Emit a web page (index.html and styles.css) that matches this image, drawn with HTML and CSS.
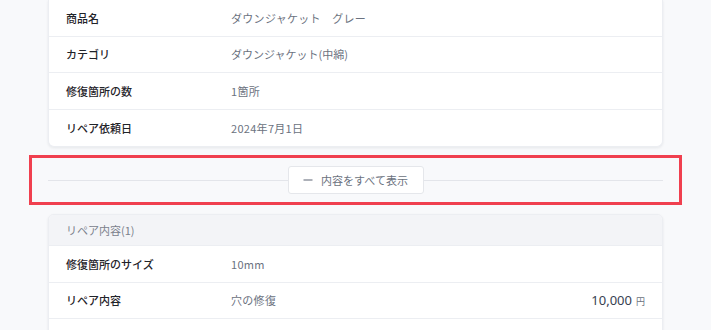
FILE: index.html
```html
<!DOCTYPE html>
<html lang="ja">
<head>
<meta charset="utf-8">
<title>リペア依頼詳細</title>
<link rel="stylesheet" href="styles.css">
</head>
<body>
<main class="page">
  <section class="card card-cont">
    <div class="row"><div class="label">商品名</div><div class="value">ダウンジャケット　グレー</div></div>
    <div class="row"><div class="label">カテゴリ</div><div class="value value-tight">ダウンジャケット(中綿)</div></div>
    <div class="row"><div class="label">修復箇所の数</div><div class="value">1箇所</div></div>
    <div class="row"><div class="label">リペア依頼日</div><div class="value">2024年7月1日</div></div>
  </section>

  <div class="toggle">
    <div class="toggle-line"></div>
    <button class="toggle-btn" type="button">
      <svg class="minus" width="10" height="10" viewBox="0 0 10 10"><path d="M0.5 5H9.5" stroke="#6b7280" stroke-width="1.1"/></svg>
      <span>内容をすべて表示</span>
    </button>
    <div class="highlight"></div>
  </div>

  <section class="card">
    <div class="card-head">リペア内容(1)</div>
    <div class="row"><div class="label">修復箇所のサイズ</div><div class="value">10mm</div></div>
    <div class="row"><div class="label">リペア内容</div><div class="value">穴の修復</div><div class="price">10,000<span class="yen">円</span></div></div>
    <div class="row"><div class="label">&nbsp;</div><div class="value"></div></div>
  </section>
</main>
</body>
</html>
```

FILE: styles.css
```css
* { box-sizing: border-box; }
html, body { margin: 0; padding: 0; }
body {
  background: #f8f9fb;
  font-family: "Noto Sans CJK JP", "Noto Sans", sans-serif;
  color: #1f2937;
  width: 711px;
  height: 330px;
  overflow: hidden;
}
.page {
  padding: 0 48px;
  display: flex;
  flex-direction: column;
}
.card {
  background: #fff;
  border: 1px solid #eceef2;
  border-radius: 6px;
  box-shadow: 0 1px 3px rgba(17, 24, 39, 0.08);
  overflow: hidden;
}
.card-cont {
  border-top: none;
  border-radius: 0 0 6px 6px;
}
.row {
  display: flex;
  align-items: center;
  height: 36.5px;
  padding: 0 17px;
  border-bottom: 1px solid #eceef2;
  font-size: 11px;
}
.row:last-child { border-bottom: none; }
.label {
  width: 165px;
  font-weight: 500;
  color: #1f2329;
}
.value {
  flex: 1;
  color: #6b7280;
  letter-spacing: 0.3px;
}
.value-tight { letter-spacing: 0; }
.price {
  font-size: 13px;
  color: #374151;
  font-family: "Noto Sans", "Noto Sans CJK JP", sans-serif;
}
.yen {
  font-size: 9px;
  margin-left: 4px;
  color: #6b7280;
  font-family: "Noto Sans CJK JP", sans-serif;
}
.toggle {
  position: relative;
  display: flex;
  justify-content: center;
  margin: 19px 0 20px;
}
.toggle-line {
  position: absolute;
  left: 0;
  right: 0;
  top: 50%;
  border-top: 1px solid #e3e5ea;
}
.toggle-btn {
  position: relative;
  display: flex;
  align-items: center;
  gap: 8px;
  height: 28px;
  width: 136px;
  justify-content: center;
  padding: 0;
  background: #fff;
  border: 1px solid #e5e7eb;
  border-radius: 3px;
  font-family: "Noto Sans CJK JP", sans-serif;
  font-size: 11px;
  color: #6b7280;
}
.minus { display: block; }
.highlight {
  position: absolute;
  top: -11px;
  bottom: -11px;
  left: -19px;
  right: -19px;
  border: 3px solid #f0404f;
  pointer-events: none;
}
.card-head {
  height: 31px;
  display: flex;
  align-items: center;
  padding: 0 17px;
  background: #f3f4f7;
  border-bottom: 1px solid #eceef2;
  font-size: 11px;
  color: #7b818c;
}
```
